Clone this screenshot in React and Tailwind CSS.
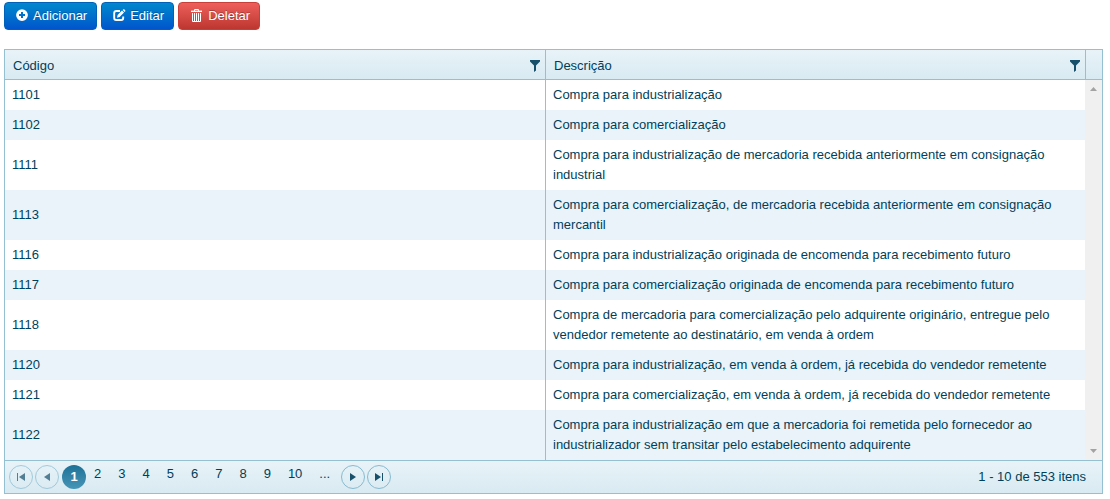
import React from 'react';

const rows = [
  { code: '1101', description: 'Compra para industrialização' },
  { code: '1102', description: 'Compra para comercialização' },
  { code: '1111', description: 'Compra para industrialização de mercadoria recebida anteriormente em consignação industrial' },
  { code: '1113', description: 'Compra para comercialização, de mercadoria recebida anteriormente em consignação mercantil' },
  { code: '1116', description: 'Compra para industrialização originada de encomenda para recebimento futuro' },
  { code: '1117', description: 'Compra para comercialização originada de encomenda para recebimento futuro' },
  { code: '1118', description: 'Compra de mercadoria para comercialização pelo adquirente originário, entregue pelo vendedor remetente ao destinatário, em venda à ordem' },
  { code: '1120', description: 'Compra para industrialização, em venda à ordem, já recebida do vendedor remetente' },
  { code: '1121', description: 'Compra para comercialização, em venda à ordem, já recebida do vendedor remetente' },
  { code: '1122', description: 'Compra para industrialização em que a mercadoria foi remetida pelo fornecedor ao industrializador sem transitar pelo estabelecimento adquirente' },
];

const pages = ['2', '3', '4', '5', '6', '7', '8', '9', '10', '...'];

function PlusIcon() {
  return (
    <svg width="13" height="14" viewBox="0 0 13 14" aria-hidden="true">
      <path fillRule="evenodd" fill="#fff" d="M6 .2a5.9 5.9 0 1 0 0 11.8a5.9 5.9 0 0 0 0-11.8zM5 3h2v2h2v2H7v2H5V7H3V5h2z" />
    </svg>
  );
}

function EditIcon() {
  return (
    <svg width="13" height="14" viewBox="0 0 13 14" aria-hidden="true">
      <path fill="none" stroke="#fff" strokeWidth="1.9" d="M7 2H3.4Q1.2 2 1.2 4v5q0 2 2 2h5q2 0 2-2V7.4" />
      <path fill="#fff" d="M4 8.7l.6-2.7l4.4-4.4l2 2l-4.4 4.4zM9.7 1l.7-.7q.4-.3.8 0l1.1 1.1q.3.4 0 .8l-.7.7z" />
    </svg>
  );
}

function TrashIcon() {
  return (
    <svg width="14" height="14" viewBox="0 0 14 14" aria-hidden="true">
      <path fill="none" stroke="#fff" d="M4.5 2V.5h4V2M2.5 4v8.5h8V4M4.5 4v8M6.5 4v8M8.5 4v8" />
      <path fill="#fff" d="M1 1.6h11V3H1z" />
    </svg>
  );
}

function FilterIcon() {
  return (
    <svg width="10" height="12" viewBox="0 0 10 12" aria-hidden="true">
      <path fill="#17506b" d="M0 0h10v1.6L6 5.4v5L4 12V5.4L0 1.6z" />
    </svg>
  );
}

function ToolButton({ icon, label, tone }) {
  return (
    <button
      type="button"
      className={`flex h-7 items-center gap-1 rounded border pl-[11px] pr-[9px] text-[13px] leading-5 text-white [text-shadow:0_-1px_0_rgba(0,0,0,0.25)] ${tone}`}
    >
      {icon}
      <span>{label}</span>
    </button>
  );
}

function HeaderCell({ title, className }) {
  return (
    <th scope="col" className={`h-[30px] pl-2 pr-[5px] text-left font-normal ${className}`}>
      <div className="flex items-center justify-between pt-0.5">
        <span>{title}</span>
        <button type="button" aria-label={`Filtrar ${title}`}>
          <FilterIcon />
        </button>
      </div>
    </th>
  );
}

function ArrowButton({ label, path, disabled }) {
  return (
    <button
      type="button"
      aria-label={label}
      disabled={disabled}
      className="flex size-6 items-center justify-center rounded-full border border-[#86bbcf] disabled:opacity-70"
    >
      <svg width="10" height="8" viewBox="0 0 10 8" aria-hidden="true">
        <path fill="#17506b" d={path} />
      </svg>
    </button>
  );
}

export default function App() {
  const blue = 'border-[#0061b8] bg-linear-to-b from-[#0088cc] to-[#0055cc]';
  const red = 'border-[#c9403b] bg-linear-to-b from-[#ee5f5b] to-[#bd362f]';

  return (
    <main className="pt-0.5 pl-1 pr-[7px] font-['Liberation_Sans',Arial,sans-serif] text-[13px] leading-5 text-[#003f59]">
      <div className="mb-[19px] flex gap-1">
        <ToolButton icon={<PlusIcon />} label="Adicionar" tone={blue} />
        <ToolButton icon={<EditIcon />} label="Editar" tone={blue} />
        <ToolButton icon={<TrashIcon />} label="Deletar" tone={red} />
      </div>

      <section className="border border-[#94c0d2]">
        <div className="grid grid-cols-[1fr_17px]">
          <table className="w-full table-fixed border-separate border-spacing-0">
            <thead className="bg-linear-to-b from-[#e8f3f8] to-[#d9eaf2]">
              <tr>
                <HeaderCell title="Código" className="border-b border-[#94c0d2]" />
                <HeaderCell title="Descrição" className="border-b border-l border-[#94c0d2]" />
              </tr>
            </thead>
            <tbody>
              {rows.map((row) => (
                <tr key={row.code} className="even:bg-[#e9f3f9]">
                  <td className="px-[7px] py-[5px]">{row.code}</td>
                  <td className="border-l border-[#94c0d2] px-[7px] py-[5px]">{row.description}</td>
                </tr>
              ))}
            </tbody>
          </table>

          {/* scroll track */}
          <div className="flex flex-col">
            <div className="h-[30px] border-b border-l border-[#94c0d2] bg-linear-to-b from-[#e8f3f8] to-[#d9eaf2]" />
            <div className="flex flex-1 flex-col items-center justify-between bg-[#f0f0f0] py-[7px]">
              <svg width="7" height="4" viewBox="0 0 7 4" aria-hidden="true">
                <path fill="#a3a3a3" d="M3.5 0L7 4H0z" />
              </svg>
              <svg width="7" height="4" viewBox="0 0 7 4" aria-hidden="true">
                <path fill="#a3a3a3" d="M0 0h7L3.5 4z" />
              </svg>
            </div>
          </div>
        </div>

        <nav
          aria-label="Paginação"
          className="flex h-[33px] items-center border-t border-[#94c0d2] bg-linear-to-b from-[#e8f3f8] to-[#d9eaf2] pl-1 pr-4"
        >
          <div className="flex gap-0.5">
            <ArrowButton label="Primeira página" path="M1 0h1v8H1zM9 0v8L3 4z" disabled />
            <ArrowButton label="Página anterior" path="M8 0v8L2 4z" disabled />
          </div>
          <button
            type="button"
            aria-current="page"
            className="ml-[3px] size-6 rounded-full bg-linear-to-b from-[#1c7197] to-[#4796b8] font-bold text-white"
          >
            1
          </button>
          <div className="flex gap-px self-start pt-[3px]">
            {pages.map((page) => (
              <button key={page} type="button" className="px-2">
                {page}
              </button>
            ))}
          </div>
          <div className="flex gap-0.5 pl-[3px]">
            <ArrowButton label="Próxima página" path="M2 0v8l6-4z" />
            <ArrowButton label="Última página" path="M8 0h1v8H8zM1 0v8l6-4z" />
          </div>
          <span className="ml-auto">1 - 10 de 553 itens</span>
        </nav>
      </section>
    </main>
  );
}
